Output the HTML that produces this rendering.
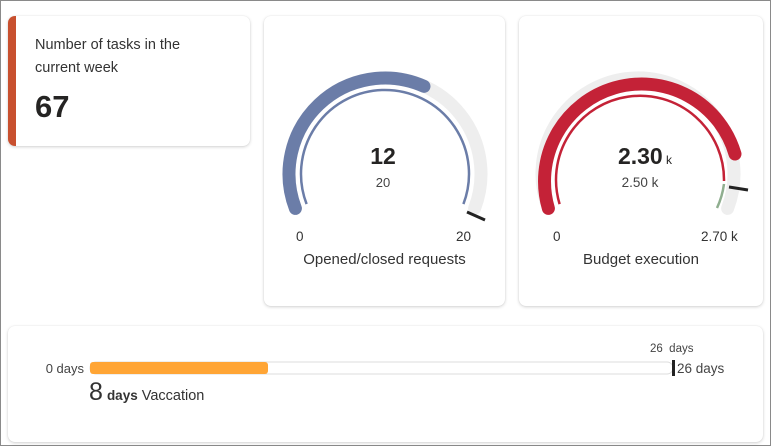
<!DOCTYPE html>
<html><head><style>
body{margin:0;width:771px;height:446px;background:#fff;font-family:"Liberation Sans",sans-serif;color:#252423;position:relative;overflow:hidden}
.frame{position:absolute;left:0;top:0;width:769px;height:444px;border:1px solid #8a8a8a}
.card{position:absolute;background:#fff;border-radius:7px;box-shadow:0 1px 3px rgba(0,0,0,.18),0 0 1px rgba(0,0,0,.1)}
.t{position:absolute;white-space:nowrap}
</style></head><body>
<div class="frame"></div>
<div class="card" style="left:8px;top:16px;width:242px;height:130px;overflow:hidden">
 <div style="position:absolute;left:0;top:0;width:8px;height:130px;background:#c8502f"></div>
 <div class="t" style="left:27px;top:18px;font-size:14.5px;line-height:23px;color:#333">Number of tasks in the<br>current week</div>
 <div class="t" style="left:27px;top:73px;font-size:31px;font-weight:bold">67</div>
</div>
<div class="card" style="left:264px;top:16px;width:241px;height:290px"></div>
<div class="card" style="left:519px;top:16px;width:244px;height:290px"></div>
<div class="card" style="left:8px;top:326px;width:755px;height:116px"></div>
<svg style="position:absolute;left:0;top:0" width="771" height="446">
<g fill="none" stroke-linecap="round">
 <path d="M295.4 208.4 A96 96 0 1 1 474.6 208.4" stroke="#eeeeee" stroke-width="13"/>
 <path d="M295.4 208.4 A96 96 0 0 1 424 86.3" stroke="#6b7da8" stroke-width="13"/>
 <path d="M306.6 204.1 A84 84 0 1 1 463.4 204.1" stroke="#6b7da8" stroke-width="2.5" stroke-linecap="butt"/>
 <line x1="467" y1="212" x2="485" y2="220" stroke="#222" stroke-width="3" stroke-linecap="butt"/>
 <path d="M548.4 208.4 A96 96 0 1 1 727.6 208.4" stroke="#eeeeee" stroke-width="13"/>
 <path d="M548.4 208.4 A96 96 0 1 1 735 154" stroke="#c42237" stroke-width="13"/>
 <path d="M559.6 204.1 A84 84 0 1 1 724 181" stroke="#c42237" stroke-width="2.5" stroke-linecap="butt"/>
 <path d="M724 184 A84 84 0 0 1 717 208" stroke="#8fae8f" stroke-width="2.5" stroke-linecap="butt"/>
 <line x1="729" y1="187" x2="748" y2="190" stroke="#222" stroke-width="3" stroke-linecap="butt"/>
</g>
<rect x="90" y="362" width="583" height="12" rx="6" fill="#fff" stroke="#ddd"/>
<rect x="90" y="362" width="178" height="12" rx="3" fill="#ffa535"/>
<rect x="672" y="360" width="3" height="16" fill="#222"/>
</svg>
<div class="t" style="left:355px;top:143px;width:56px;text-align:center;font-size:23px;font-weight:bold">12</div>
<div class="t" style="left:355px;top:175px;width:56px;text-align:center;font-size:13px;color:#444">20</div>
<div class="t" style="left:296px;top:229px;font-size:13.5px;color:#333">0</div>
<div class="t" style="left:456px;top:229px;font-size:13.5px;color:#333">20</div>
<div class="t" style="left:264px;top:251px;width:241px;text-align:center;font-size:15px;color:#333">Opened/closed requests</div>
<div class="t" style="left:600px;top:143px;width:90px;text-align:center;font-size:23px;font-weight:bold">2.30<span style="font-size:12px;font-weight:normal"> k</span></div>
<div class="t" style="left:600px;top:175px;width:80px;text-align:center;font-size:13.5px;color:#444">2.50 k</div>
<div class="t" style="left:553px;top:229px;font-size:13.5px;color:#333">0</div>
<div class="t" style="left:701px;top:229px;font-size:13.5px;color:#333">2.70 k</div>
<div class="t" style="left:519px;top:251px;width:244px;text-align:center;font-size:15px;color:#333">Budget execution</div>
<div class="t" style="left:30px;top:361px;width:54px;text-align:right;font-size:13px;color:#444">0 days</div>
<div class="t" style="left:677px;top:361px;font-size:13.5px;color:#444">26 days</div>
<div class="t" style="left:650px;top:343px;font-size:11.5px;color:#444">26&nbsp; days</div>
<div class="t" style="left:89px;top:378px;font-size:14.5px;color:#333"><span style="font-size:25px">8</span> <b style="font-size:13.5px">days</b> Vaccation</div>
</body></html>
